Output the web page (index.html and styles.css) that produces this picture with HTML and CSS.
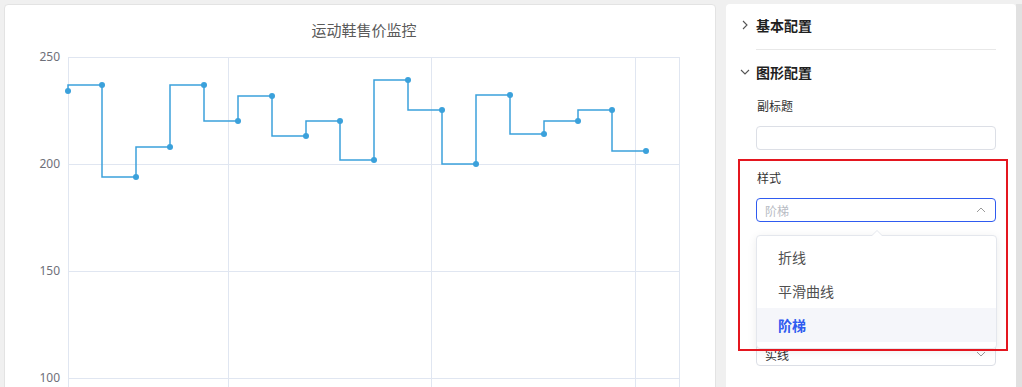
FILE: index.html
```html
<!DOCTYPE html>
<html lang="zh-CN">
<head>
<meta charset="utf-8">
<title>运动鞋售价监控</title>
<link rel="stylesheet" href="styles.css">
</head>
<body>
<div class="page">
  <div class="chart-card">
    <svg class="chart" width="710" height="395" viewBox="5 5 710 395" xmlns="http://www.w3.org/2000/svg">
      <text class="chart-title" x="364" y="36" text-anchor="middle">运动鞋售价监控</text>
      <g class="grid">
        <line x1="68" y1="57.5" x2="679" y2="57.5"/>
        <line x1="68" y1="164.5" x2="679" y2="164.5"/>
        <line x1="68" y1="271.5" x2="679" y2="271.5"/>
        <line x1="68" y1="378.5" x2="679" y2="378.5"/>
        <line x1="68.5" y1="57" x2="68.5" y2="400"/>
        <line x1="228.5" y1="57" x2="228.5" y2="400"/>
        <line x1="431.5" y1="57" x2="431.5" y2="400"/>
        <line x1="635.5" y1="57" x2="635.5" y2="400"/>
        <line x1="679.5" y1="57" x2="679.5" y2="400"/>
      </g>
      <g class="axis-labels">
        <text x="60" y="61">250</text>
        <text x="60" y="168">200</text>
        <text x="60" y="275">150</text>
        <text x="60" y="382">100</text>
      </g>
      <path class="series" d="M68,91 V85 H102 V177 H136 V147 H170 V85 H204 V121 H238 V96 H272 V136 H306 V121 H340 V160 H374 V80 H408 V110 H442 V164 H476 V95 H510 V134 H544 V121 H578 V110 H612 V151 H646"/>
      <g class="dots">
        <circle cx="68" cy="91" r="3"/>
        <circle cx="102" cy="85" r="3"/>
        <circle cx="136" cy="177" r="3"/>
        <circle cx="170" cy="147" r="3"/>
        <circle cx="204" cy="85" r="3"/>
        <circle cx="238" cy="121" r="3"/>
        <circle cx="272" cy="96" r="3"/>
        <circle cx="306" cy="136" r="3"/>
        <circle cx="340" cy="121" r="3"/>
        <circle cx="374" cy="160" r="3"/>
        <circle cx="408" cy="80" r="3"/>
        <circle cx="442" cy="110" r="3"/>
        <circle cx="476" cy="164" r="3"/>
        <circle cx="510" cy="95" r="3"/>
        <circle cx="544" cy="134" r="3"/>
        <circle cx="578" cy="121" r="3"/>
        <circle cx="612" cy="110" r="3"/>
        <circle cx="646" cy="151" r="3"/>
      </g>
    </svg>
  </div>

  <div class="panel">
    <div class="section-head">
      <svg class="chev" width="10" height="10" viewBox="0 0 10 10"><path d="M3 1 L7 5 L3 9"/></svg>
      <span>基本配置</span>
    </div>
    <div class="divider"></div>
    <div class="section-head">
      <svg class="chev" width="10" height="10" viewBox="0 0 10 10"><path d="M1 3 L5 7 L9 3"/></svg>
      <span>图形配置</span>
    </div>
    <div class="form">
      <div class="form-item">
        <div class="label">副标题</div>
        <div class="input"></div>
      </div>
      <div class="form-item">
        <div class="label">样式</div>
        <div class="input select is-focus">
          <span class="placeholder">阶梯</span>
          <svg class="arrow" width="12" height="12" viewBox="0 0 12 12"><path d="M2 8 L6 4 L10 8"/></svg>
        </div>
      </div>
      <div class="form-item">
        <div class="label"></div>
        <div class="input"></div>
      </div>
      <div class="form-item">
        <div class="label"></div>
        <div class="input select">
          <span class="value">实线</span>
          <svg class="arrow" width="12" height="12" viewBox="0 0 12 12"><path d="M2 4 L6 8 L10 4"/></svg>
        </div>
      </div>
    </div>

    <div class="dropdown">
      <div class="dropdown-arrow"></div>
      <div class="option">折线</div>
      <div class="option">平滑曲线</div>
      <div class="option selected">阶梯</div>
    </div>
    <div class="highlight-box"></div>
  </div>

  <div class="scroll-track"></div>
</div>
</body>
</html>
```

FILE: styles.css
```css
* {
  box-sizing: border-box;
}

html, body {
  margin: 0;
  padding: 0;
  height: 100%;
  overflow: hidden;
  background: #f0f0f0;
  font-family: "Noto Sans CJK SC", "Noto Sans", "Liberation Sans", sans-serif;
}

.page {
  display: flex;
  align-items: flex-start;
  padding: 4px 0 0 4px;
  height: 387px;
  overflow: hidden;
}

.chart-card {
  width: 712px;
  height: 400px;
  background: #fff;
  border: 1px solid #e3e3e3;
  border-radius: 4px;
  flex: none;
  overflow: hidden;
}

.chart {
  display: block;
}

.chart-title {
  font-size: 15px;
  fill: #5a5a5a;
  font-family: "Noto Sans CJK SC", "Noto Sans", sans-serif;
}

.grid line {
  stroke: #e0e6f1;
  stroke-width: 1;
}

.axis-labels text {
  font-size: 12px;
  fill: #6e7079;
  text-anchor: end;
  font-family: "Noto Sans", "Liberation Sans", sans-serif;
}

.series {
  fill: none;
  stroke: #3ba1db;
  stroke-width: 1.5;
}

.dots circle {
  fill: #3ba1db;
}

.panel {
  position: relative;
  margin-left: 10px;
  width: 290px;
  height: 400px;
  background: #fff;
  border-radius: 4px;
  flex: none;
}

.section-head {
  display: flex;
  align-items: center;
  gap: 6px;
  height: 42px;
  padding-left: 14px;
  font-size: 14px;
  font-weight: 600;
  color: #1f1f1f;
}

.section-head + .divider + .section-head {
  margin-top: 1px;
}

.chev path {
  fill: none;
  stroke: #555;
  stroke-width: 1.1;
}

.divider {
  margin: 3px 20px 0 30px;
  height: 1px;
  background: #e8e8e8;
}

.form {
  padding: 3px 20px 0 30px;
}

.form-item {
  margin-bottom: 18px;
}

.label {
  height: 20px;
  line-height: 20px;
  font-size: 12px;
  color: #333;
  padding-left: 1px;
  margin-bottom: 10px;
}

.input {
  height: 24px;
  border: 1px solid #dcdfe6;
  border-radius: 4px;
  background: #fff;
}

.select {
  display: flex;
  align-items: center;
  justify-content: space-between;
  padding: 0 8px 0 8px;
  font-size: 12px;
}

.select.is-focus {
  border-color: #2f5bf0;
}

.placeholder {
  color: #b8bcc4;
}

.value {
  color: #333;
}

.arrow path {
  fill: none;
  stroke: #9a9a9a;
  stroke-width: 1;
}

.dropdown {
  position: absolute;
  top: 231px;
  left: 30px;
  width: 241px;
  height: 114px;
  padding: 4px 0 8px;
  background: #fff;
  border: 1px solid #e4e7ed;
  border-radius: 4px;
  box-shadow: 0 2px 10px rgba(0, 0, 0, 0.08);
}

.dropdown-arrow {
  position: absolute;
  top: -6px;
  left: 114px;
  width: 0;
  height: 0;
  border-left: 6px solid transparent;
  border-right: 6px solid transparent;
  border-bottom: 6px solid #e4e7ed;
}

.dropdown-arrow::after {
  content: "";
  position: absolute;
  top: 1px;
  left: -5px;
  border-left: 5px solid transparent;
  border-right: 5px solid transparent;
  border-bottom: 5px solid #fff;
}

.option {
  height: 34px;
  line-height: 34px;
  padding-left: 21px;
  font-size: 14px;
  color: #505050;
}

.option.selected {
  background: #f5f6fa;
  color: #2f5bf0;
  font-weight: 700;
}

.highlight-box {
  position: absolute;
  top: 155px;
  left: 12px;
  width: 270px;
  height: 192px;
  border: 2px solid #e4161f;
}

.scroll-track {
  width: 6px;
  height: 400px;
  background: #e1e1e1;
  flex: none;
}
```
